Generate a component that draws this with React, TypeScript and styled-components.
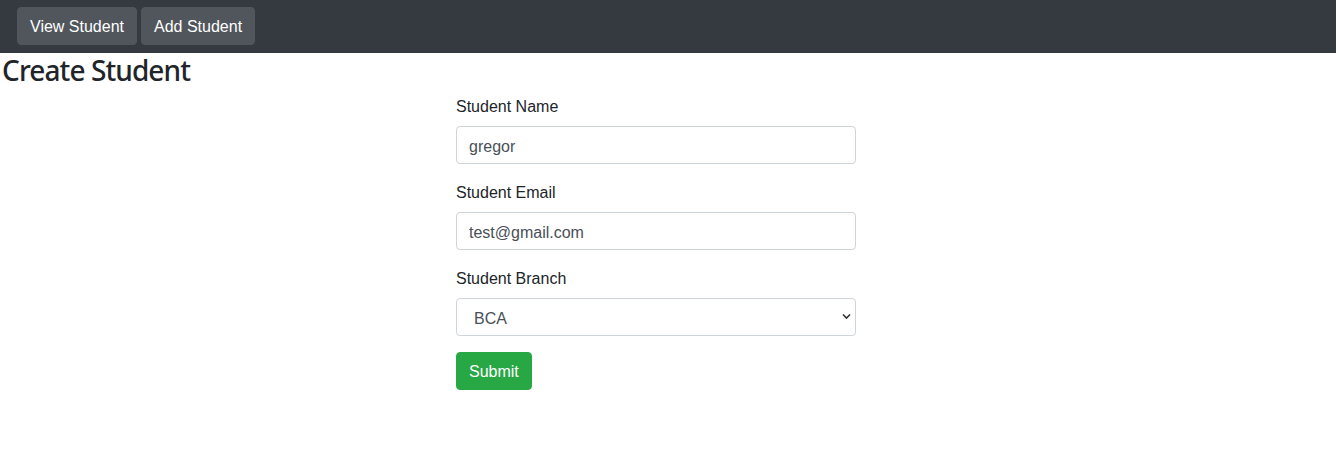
import React, { useState } from 'react';
import styled, { createGlobalStyle } from 'styled-components';

const GlobalStyle = createGlobalStyle`
  * {
    box-sizing: border-box;
  }
  body {
    margin: 0;
    background: #fff;
    color: #212529;
    font-family: "Liberation Sans", Arial, sans-serif;
    font-size: 16px;
    line-height: 1.5;
  }
`;

// --- Barra superior ---
const NavBar = styled.nav`
  display: flex;
  align-items: center;
  gap: 4px;
  padding: 7px 16px 8px 17px;
  margin-right: 3px;
  background-color: #343a40;
`;

const NavButton = styled.button`
  height: 38px;
  padding: 2px 12px 0;
  border: 1px solid #50565c;
  border-radius: 4px;
  background-color: #50565c;
  color: #fff;
  font-family: inherit;
  font-size: 16px;
  cursor: pointer;
`;

// --- Formulario ---
const Title = styled.h3`
  margin: 0 0 7px;
  padding: 1px 0 0 2px;
  font-family: "Noto Sans", "Liberation Sans", sans-serif;
  font-size: 28px;
  font-weight: 500;
  letter-spacing: -0.9px;
  line-height: 33px;
  color: #212529;
`;

const Form = styled.form`
  width: 400px;
  margin-left: 456px;
`;

const FormGroup = styled.div`
  margin-bottom: 16px;
`;

const Label = styled.label`
  display: block;
  padding-top: 1px;
  margin-bottom: 7px;
  color: #212529;
`;

const Input = styled.input`
  display: block;
  width: 100%;
  height: 38px;
  padding: 8px 12px 4px;
  border: 1px solid #ced4da;
  border-radius: 4px;
  font-family: inherit;
  font-size: 16px;
  color: #495057;
  background: #fff;
  outline: none;
`;

const SelectWrap = styled.div`
  position: relative;
`;

const Select = styled.select`
  display: block;
  width: 100%;
  height: 38px;
  padding: 7px 28px 5px 17px;
  border: 1px solid #ced4da;
  border-radius: 4px;
  font-family: inherit;
  font-size: 16px;
  color: #495057;
  background: #fff;
  appearance: none;
  outline: none;
`;

const Chevron = styled.svg`
  position: absolute;
  right: 5px;
  top: 15px;
  width: 9px;
  height: 7px;
  pointer-events: none;
`;

const SubmitButton = styled.button`
  height: 38px;
  padding: 2px 12px 0;
  border: 1px solid #28a745;
  border-radius: 4px;
  background-color: #28a745;
  color: #fff;
  font-family: inherit;
  font-size: 16px;
  cursor: pointer;
`;

const App: React.FC = () => {
  const [name, setName] = useState('gregor');
  const [email, setEmail] = useState('test@gmail.com');
  const [branch, setBranch] = useState('BCA');

  return (
    <>
      <GlobalStyle />
      <NavBar>
        <NavButton>View Student</NavButton>
        <NavButton>Add Student</NavButton>
      </NavBar>

      <Title>Create Student</Title>

      <Form onSubmit={(e) => e.preventDefault()}>
        <FormGroup>
          <Label>Student Name</Label>
          <Input value={name} onChange={(e) => setName(e.target.value)} />
        </FormGroup>

        <FormGroup>
          <Label>Student Email</Label>
          <Input value={email} onChange={(e) => setEmail(e.target.value)} />
        </FormGroup>

        <FormGroup>
          <Label>Student Branch</Label>
          <SelectWrap>
            <Select value={branch} onChange={(e) => setBranch(e.target.value)}>
              <option value="BCA">BCA</option>
              <option value="BBA">BBA</option>
              <option value="MCA">MCA</option>
            </Select>
            <Chevron viewBox="0 0 9 7">
              <path d="M1 1.5l3.5 3.5 3.5-3.5" fill="none" stroke="#333" strokeWidth="1.6" />
            </Chevron>
          </SelectWrap>
        </FormGroup>

        <SubmitButton type="submit">Submit</SubmitButton>
      </Form>
    </>
  );
};

export default App;
